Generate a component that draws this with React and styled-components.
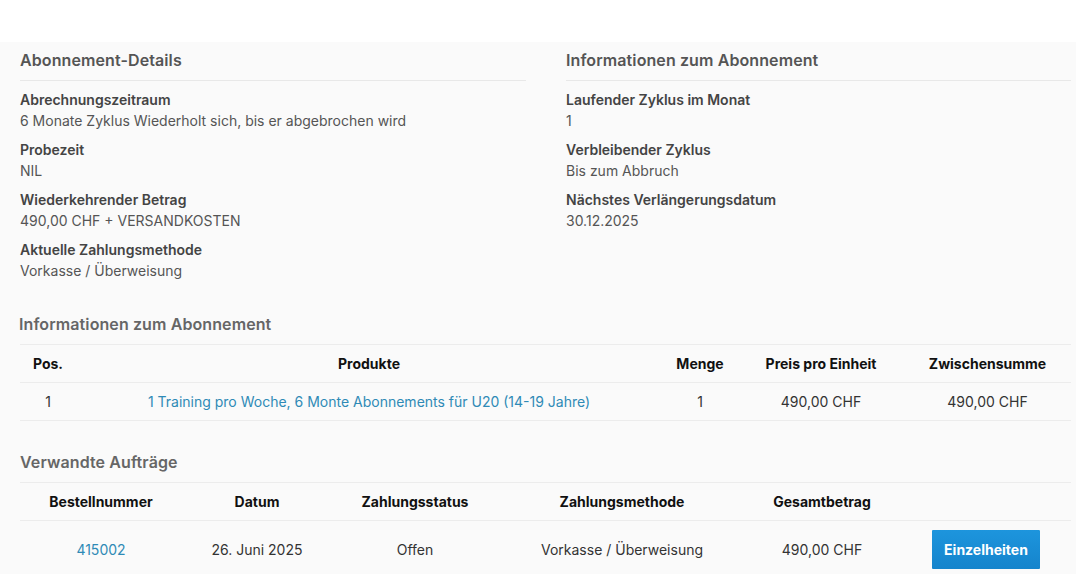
import React from "react";
import styled, { createGlobalStyle } from "styled-components";

const Global = createGlobalStyle`
  html, body { margin: 0; padding: 0; background: #ffffff; }
  body { font-family: Inter, "Noto Sans", "Liberation Sans", sans-serif; font-size: 14px; color: #444; }
  * { box-sizing: border-box; }
`;

const Page = styled.div`
  width: 1092px;
  height: 574px;
  overflow: hidden;
  padding-top: 42px;
`;

const Panel = styled.div`
  width: 1076px;
  min-height: 600px;
  background: #fafafa;
  padding: 6px 5px 0 20px;
`;

const TwoCols = styled.div`
  display: grid;
  grid-template-columns: 506px 505px;
  column-gap: 40px;
`;

const Heading = styled.h3`
  margin: 0;
  font-size: 16px;
  line-height: 24px;
  font-weight: 600;
  letter-spacing: 0.1px;
  color: ${(p) => p.$color || "#555"};
  padding-bottom: ${(p) => (p.$divided ? "8px" : "0")};
  border-bottom: ${(p) => (p.$divided ? "1px solid #e8e8e8" : "none")};
  margin-left: ${(p) => p.$indent || 0}px;
`;

const List = styled.dl`
  margin: 8px 0 0;
  display: flex;
  flex-direction: column;
  gap: 8px;
`;

const Item = styled.div`
  display: flex;
  flex-direction: column;
`;

const Label = styled.dt`
  font-weight: 600;
  color: #444;
  line-height: 21px;
`;

const Value = styled.dd`
  margin: 0;
  color: #555;
  line-height: 21px;
`;

const Section = styled.section`
  margin-top: ${(p) => p.$top}px;
`;

const Table = styled.table`
  width: 1051px;
  border-collapse: collapse;
  margin-top: 8px;
  table-layout: fixed;
`;

const Th = styled.th`
  font-weight: 700;
  color: #111;
  text-align: center;
  height: 38px;
  padding: 0 4px;
  border-top: 1px solid #ececec;
  border-bottom: 1px solid #ececec;
  font-size: 14px;
`;

const Td = styled.td`
  text-align: center;
  color: #333;
  height: ${(p) => p.$h || 38}px;
  padding: 0 4px;
  border-bottom: 1px solid #ececec;
  font-size: 14px;
`;

const Link = styled.a`
  color: #2f8ab6;
  text-decoration: none;
`;

const Button = styled.button`
  font-family: inherit;
  font-size: 14px;
  font-weight: 700;
  color: #fff;
  background: linear-gradient(#1d95dd, #1584cc);
  border: none;
  border-radius: 1px;
  width: 108px;
  height: 39px;
  margin-left: 3px;
  cursor: pointer;
`;

const details = [
  ["Abrechnungszeitraum", "6 Monate Zyklus Wiederholt sich, bis er abgebrochen wird"],
  ["Probezeit", "NIL"],
  ["Wiederkehrender Betrag", "490,00 CHF + VERSANDKOSTEN"],
  ["Aktuelle Zahlungsmethode", "Vorkasse / Überweisung"],
];

const info = [
  ["Laufender Zyklus im Monat", "1"],
  ["Verbleibender Zyklus", "Bis zum Abbruch"],
  ["Nächstes Verlängerungsdatum", "30.12.2025"],
];

function InfoBlock({ title, items }) {
  return (
    <div>
      <Heading $divided>{title}</Heading>
      <List>
        {items.map(([l, v]) => (
          <Item key={l}>
            <Label>{l}</Label>
            <Value>{v}</Value>
          </Item>
        ))}
      </List>
    </div>
  );
}

export default function App() {
  return (
    <>
      <Global />
      <Page>
        <Panel>
          <TwoCols>
            <InfoBlock title="Abonnement-Details" items={details} />
            <InfoBlock title="Informationen zum Abonnement" items={info} />
          </TwoCols>

          <Section $top={31}>
            <Heading $color="#666" $indent={-1}>Informationen zum Abonnement</Heading>
            <Table>
              <colgroup>
                <col style={{ width: 56 }} />
                <col style={{ width: 586 }} />
                <col style={{ width: 76 }} />
                <col style={{ width: 166 }} />
                <col style={{ width: 167 }} />
              </colgroup>
              <thead>
                <tr>
                  <Th>Pos.</Th>
                  <Th>Produkte</Th>
                  <Th>Menge</Th>
                  <Th>Preis pro Einheit</Th>
                  <Th>Zwischensumme</Th>
                </tr>
              </thead>
              <tbody>
                <tr>
                  <Td>1</Td>
                  <Td>
                    <Link href="#">1 Training pro Woche, 6 Monte Abonnements für U20 (14-19 Jahre)</Link>
                  </Td>
                  <Td>1</Td>
                  <Td>490,00 CHF</Td>
                  <Td>490,00 CHF</Td>
                </tr>
              </tbody>
            </Table>
          </Section>

          <Section $top={29}>
            <Heading $color="#666">Verwandte Aufträge</Heading>
            <Table>
              <colgroup>
                <col style={{ width: 162 }} />
                <col style={{ width: 150 }} />
                <col style={{ width: 166 }} />
                <col style={{ width: 248 }} />
                <col style={{ width: 152 }} />
                <col style={{ width: 173 }} />
              </colgroup>
              <thead>
                <tr>
                  <Th>Bestellnummer</Th>
                  <Th>Datum</Th>
                  <Th>Zahlungsstatus</Th>
                  <Th>Zahlungsmethode</Th>
                  <Th>Gesamtbetrag</Th>
                  <Th></Th>
                </tr>
              </thead>
              <tbody>
                <tr>
                  <Td $h={57}>
                    <Link href="#">415002</Link>
                  </Td>
                  <Td $h={57}>26. Juni 2025</Td>
                  <Td $h={57}>Offen</Td>
                  <Td $h={57}>Vorkasse / Überweisung</Td>
                  <Td $h={57}>490,00 CHF</Td>
                  <Td $h={57}>
                    <Button>Einzelheiten</Button>
                  </Td>
                </tr>
              </tbody>
            </Table>
          </Section>
        </Panel>
      </Page>
    </>
  );
}
